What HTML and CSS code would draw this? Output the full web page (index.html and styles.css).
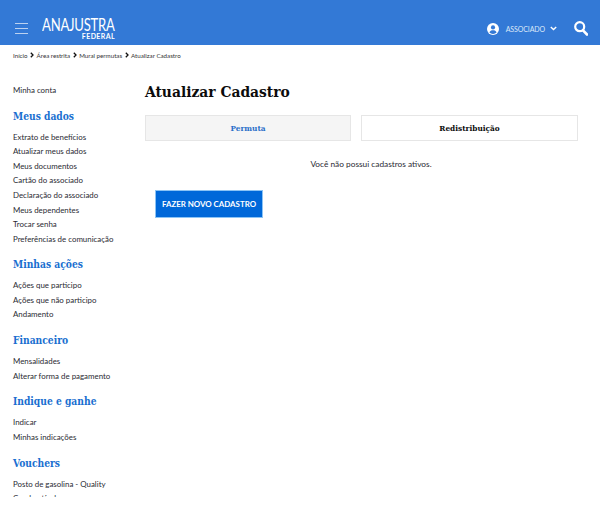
FILE: index.html
```html
<!DOCTYPE html>
<html lang="pt-BR">
<head>
<meta charset="utf-8">
<title>Atualizar Cadastro</title>
<link rel="stylesheet" href="styles.css">
</head>
<body>
<header class="topbar">
  <div class="brand-group">
    <svg class="menu-icon" width="13" height="11" viewBox="0 0 13 11"><path d="M0 .5h13M0 5.5h13M0 10.5h13" stroke="#bcd2f0" stroke-width="1" fill="none"/></svg>
    <div class="logo">
      <span class="logo-main">ANAJUSTRA</span>
      <span class="logo-sub">FEDERAL</span>
    </div>
  </div>
  <div class="top-actions">
    <svg class="user-icon" width="12" height="12" viewBox="0 0 12 12"><circle cx="6" cy="6" r="6" fill="#fff"/><circle cx="6" cy="4.4" r="2.1" fill="#3379d6"/><path d="M2.4 9.6c.5-1.8 2-2.4 3.6-2.4s3.1.6 3.6 2.4A5 5 0 0 1 6 11a5 5 0 0 1-3.6-1.4z" fill="#3379d6"/></svg>
    <span class="user-label">ASSOCIADO</span>
    <svg class="chevron" width="7" height="5" viewBox="0 0 7 5"><path d="M.8 1l2.7 2.6L6.2 1" stroke="#fff" stroke-width="1.4" fill="none"/></svg>
    <svg class="search-icon" width="14" height="15" viewBox="0 0 14 15"><circle cx="5.7" cy="5.7" r="4.5" stroke="#fff" stroke-width="2.2" fill="none"/><path d="M9 9.3l4 4.2" stroke="#fff" stroke-width="2.6" stroke-linecap="round"/></svg>
  </div>
</header>
<nav class="breadcrumb">
  <span>Início</span><svg class="sep" width="4" height="6" viewBox="0 0 4 6"><path d="M.8.8L3 3 .8 5.2" stroke="#111" stroke-width="1.3" fill="none"/></svg><span>Área restrita</span><svg class="sep" width="4" height="6" viewBox="0 0 4 6"><path d="M.8.8L3 3 .8 5.2" stroke="#111" stroke-width="1.3" fill="none"/></svg><span>Mural permutas</span><svg class="sep" width="4" height="6" viewBox="0 0 4 6"><path d="M.8.8L3 3 .8 5.2" stroke="#111" stroke-width="1.3" fill="none"/></svg><span>Atualizar Cadastro</span>
</nav>
<div class="layout">
  <aside class="sidebar">
    <a class="side-link">Minha conta</a>
    <h3>Meus dados</h3>
    <a class="side-link">Extrato de benefícios</a>
    <a class="side-link">Atualizar meus dados</a>
    <a class="side-link">Meus documentos</a>
    <a class="side-link">Cartão do associado</a>
    <a class="side-link">Declaração do associado</a>
    <a class="side-link">Meus dependentes</a>
    <a class="side-link">Trocar senha</a>
    <a class="side-link">Preferências de comunicação</a>
    <h3>Minhas ações</h3>
    <a class="side-link">Ações que participo</a>
    <a class="side-link">Ações que não participo</a>
    <a class="side-link">Andamento</a>
    <h3>Financeiro</h3>
    <a class="side-link">Mensalidades</a>
    <a class="side-link">Alterar forma de pagamento</a>
    <h3>Indique e ganhe</h3>
    <a class="side-link">Indicar</a>
    <a class="side-link">Minhas indicações</a>
    <h3>Vouchers</h3>
    <a class="side-link">Posto de gasolina - Quality</a>
    <a class="side-link">Combustível</a>
  </aside>
  <main class="content">
    <h1>Atualizar Cadastro</h1>
    <div class="tabs">
      <div class="tab active">Permuta</div>
      <div class="tab">Redistribuição</div>
    </div>
    <p class="notice">Você não possui cadastros ativos.</p>
    <button class="new-btn" type="button">FAZER NOVO CADASTRO</button>
  </main>
</div>
</body>
</html>
```
FILE: styles.css
```css
* { box-sizing: border-box; }
html, body { margin: 0; height: 510px; overflow: hidden; background: #fff; }
body { font-family: Lato, sans-serif; color: #2a2a33; }
.topbar { height: 45px; background: #3379d6; display: flex; justify-content: space-between; align-items: center; padding: 12px 12px 0 15px; }
.brand-group { display: flex; align-items: center; gap: 14px; }
.logo { display: flex; flex-direction: column; align-items: flex-end; width: 73px; color: #fff; }
.logo-main { font: 17px/14px Lato, sans-serif; letter-spacing: -0.3px; white-space: nowrap; align-self: flex-start; transform: scaleX(.77); transform-origin: left center; }
.logo-sub { font: bold 7px/8px Lato, sans-serif; letter-spacing: .4px; }
.top-actions { display: flex; align-items: center; }
.user-label { font-size: 7px; color: #dce8f8; margin-left: 7px; letter-spacing: -.1px; }
.chevron { margin-left: 5px; }
.search-icon { margin-left: 17px; }
.breadcrumb { height: 20px; display: flex; align-items: center; padding-left: 13px; font-size: 6.2px; color: #333; }
.sep { margin: 0 2.5px; }
.layout { display: flex; height: 432px; overflow: hidden; }
.sidebar { width: 145px; padding: 18px 0 0 13px; flex: none; }
.sidebar h3 { font: bold 10.2px/14px "DejaVu Serif Condensed", serif; color: #1a6fd0; margin: 11.15px 0 7px; }
.side-link { display: block; font-size: 7.9px; line-height: 14.57px; color: #2a2a33; }
.content { width: 433px; padding-top: 17px; }
h1 { font: bold 15.4px/20px "DejaVu Serif Condensed", serif; color: #0c0c0c; margin: 0 0 13px; }
.tabs { display: grid; grid-template-columns: 206px 217px; gap: 10px; }
.tab { height: 26px; display: flex; align-items: center; justify-content: center; border: 1px solid #e6e6e6; font: bold 8.2px "DejaVu Serif Condensed", serif; color: #0c0c0c; }
.tab.active { background: #f5f5f5; color: #2a6fc9; }
.notice { margin: 17px 0 0; padding-left: 19px; text-align: center; font-size: 8.3px; line-height: 12px; }
.new-btn { display: block; margin: 20px 0 0 10px; width: 108px; height: 28px; padding: 0; border: 1px solid #8cc4f5; background: #0068d9; color: #fff; font: 700 7.9px Lato, sans-serif; }
```
